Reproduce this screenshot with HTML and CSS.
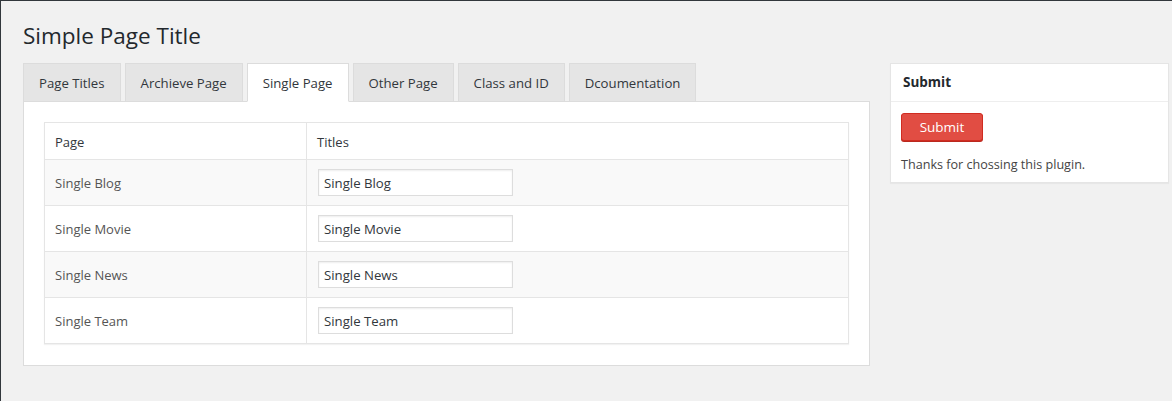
FILE: index.html
```html
<!DOCTYPE html>
<html lang="en">
<head>
<meta charset="utf-8">
<title>Simple Page Title</title>
<link rel="stylesheet" href="styles.css">
</head>
<body>
<div class="wrap">
  <h1 class="page-title">Simple Page Title</h1>
  <div class="layout">
    <div class="main">
      <nav class="tabs">
        <a class="tab">Page Titles</a>
        <a class="tab">Archieve Page</a>
        <a class="tab active">Single Page</a>
        <a class="tab">Other Page</a>
        <a class="tab">Class and ID</a>
        <a class="tab">Dcoumentation</a>
      </nav>
      <div class="panel">
        <table class="titles">
          <colgroup><col class="c1"><col class="c2"></colgroup>
          <thead>
            <tr><th>Page</th><th>Titles</th></tr>
          </thead>
          <tbody>
            <tr class="alt"><td>Single Blog</td><td><input class="field" type="text" value="Single Blog"></td></tr>
            <tr><td>Single Movie</td><td><input class="field" type="text" value="Single Movie"></td></tr>
            <tr class="alt"><td>Single News</td><td><input class="field" type="text" value="Single News"></td></tr>
            <tr><td>Single Team</td><td><input class="field" type="text" value="Single Team"></td></tr>
          </tbody>
        </table>
      </div>
    </div>
    <aside class="side">
      <div class="box">
        <div class="box-head">Submit</div>
        <div class="box-body">
          <button class="btn" type="button">Submit</button>
          <p class="note">Thanks for chossing this plugin.</p>
        </div>
      </div>
    </aside>
  </div>
</div>
</body>
</html>
```

FILE: styles.css
```css
* { box-sizing: border-box; }

html, body { height: 100%; }

body {
  margin: 0;
  background: #f1f1f1;
  border-top: 1px solid #32373c;
  border-left: 1px solid #32373c;
  font-family: "Open Sans", "Noto Sans", sans-serif;
  font-size: 13px;
  color: #444;
  overflow: hidden;
}

.wrap {
  padding: 0 3px 0 22px;
}

.page-title {
  margin: 0;
  padding: 20px 0 0;
  height: 62px;
  font-size: 22.5px;
  line-height: 29px;
  font-weight: 400;
  color: #23282d;
}

.layout {
  display: flex;
  align-items: flex-start;
  gap: 20px;
}

.main {
  width: 847px;
  flex: none;
}

.tabs {
  display: flex;
  gap: 4px;
  position: relative;
  z-index: 1;
}

.tab {
  display: block;
  height: 39px;
  padding: 0 15px;
  border: 1px solid #dcdcdc;
  background: #e5e5e5;
  font-size: 13.2px;
  line-height: 38px;
  color: #32373c;
  white-space: nowrap;
}

.tab.active {
  background: #fff;
  border-bottom-color: #fff;
}

.panel {
  margin-top: -1px;
  background: #fff;
  border: 1px solid #dcdcdc;
  padding: 20px 20px 21px;
}

.titles {
  width: 100%;
  border-collapse: collapse;
  table-layout: fixed;
  border: 1px solid #e5e5e5;
  box-shadow: 0 1px 1px rgba(0, 0, 0, .05);
  background: #fff;
}

.titles .c1 { width: 262px; }

.titles th {
  height: 37px;
  padding: 1px 10px 0;
  border: 1px solid #e5e5e5;
  text-align: left;
  font-weight: 400;
  font-size: 13px;
  color: #32373c;
}

.titles td {
  height: 46px;
  padding: 0 10px;
  border: 1px solid #e5e5e5;
  font-size: 13px;
  color: #555;
}

.titles tr.alt td { background: #f9f9f9; }

.field {
  display: block;
  width: 195px;
  height: 27px;
  margin: 0 0 0 1px;
  padding: 0 5px;
  border: 1px solid #ddd;
  box-shadow: inset 0 1px 2px rgba(0, 0, 0, .07);
  background: #fff;
  font-family: inherit;
  font-size: 13.2px;
  color: #32373c;
  outline: none;
}

.side {
  flex: 1;
}

.box {
  background: #fff;
  border: 1px solid #e5e5e5;
  box-shadow: 0 1px 1px rgba(0, 0, 0, .04);
}

.box-head {
  height: 38px;
  padding: 0 12px;
  border-bottom: 1px solid #eee;
  font-size: 13.5px;
  font-weight: 700;
  line-height: 37px;
  color: #23282d;
}

.box-body {
  padding: 11px 10px 8px;
}

.btn {
  display: block;
  width: 82px;
  height: 28px;
  padding: 0;
  border: 1px solid #d02c21;
  border-radius: 3px;
  background: #e14d43;
  box-shadow: 0 1px 0 #ba281e;
  font-family: inherit;
  font-size: 13.5px;
  line-height: 26px;
  color: #fff;
  cursor: pointer;
}

.note {
  margin: 14px 0 0;
  font-size: 12.6px;
  line-height: 19px;
  color: #444;
}
```
